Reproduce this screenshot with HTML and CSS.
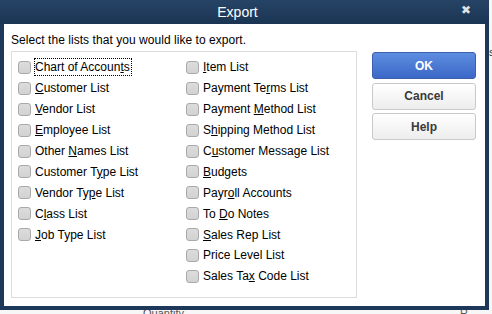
FILE: index.html
```html
<!DOCTYPE html>
<html>
<head>
<meta charset="utf-8">
<link rel="stylesheet" href="styles.css">
</head>
<body>
<div class="backdrop">
  <span class="frag frag-a">s</span>
  <span class="frag frag-b">Quantity</span>
  <span class="frag frag-c">R</span>
</div>
<div class="window">
  <div class="titlebar">
    <span class="title">Export</span>
    <span class="close">✖</span>
  </div>
  <div class="content">
    <div class="main">
      <div class="prompt">Select the lists that you would like to export.</div>
      <div class="listbox">
        <div class="col col1">
          <label class="item"><span class="cb"></span><span class="lbl focus">Chart of Accoun<u>t</u>s</span></label>
          <label class="item"><span class="cb"></span><span class="lbl"><u>C</u>ustomer List</span></label>
          <label class="item"><span class="cb"></span><span class="lbl"><u>V</u>endor List</span></label>
          <label class="item"><span class="cb"></span><span class="lbl"><u>E</u>mployee List</span></label>
          <label class="item"><span class="cb"></span><span class="lbl">Other <u>N</u>ames List</span></label>
          <label class="item"><span class="cb"></span><span class="lbl">Customer T<u>y</u>pe List</span></label>
          <label class="item"><span class="cb"></span><span class="lbl">Vendor Ty<u>p</u>e List</span></label>
          <label class="item"><span class="cb"></span><span class="lbl">C<u>l</u>ass List</span></label>
          <label class="item"><span class="cb"></span><span class="lbl"><u>J</u>ob Type List</span></label>
        </div>
        <div class="col col2">
          <label class="item"><span class="cb"></span><span class="lbl"><u>I</u>tem List</span></label>
          <label class="item"><span class="cb"></span><span class="lbl">Payment Te<u>r</u>ms List</span></label>
          <label class="item"><span class="cb"></span><span class="lbl">Payment <u>M</u>ethod List</span></label>
          <label class="item"><span class="cb"></span><span class="lbl">S<u>h</u>ipping Method List</span></label>
          <label class="item"><span class="cb"></span><span class="lbl">C<u>u</u>stomer Message List</span></label>
          <label class="item"><span class="cb"></span><span class="lbl"><u>B</u>udgets</span></label>
          <label class="item"><span class="cb"></span><span class="lbl">Payr<u>o</u>ll Accounts</span></label>
          <label class="item"><span class="cb"></span><span class="lbl">To <u>D</u>o Notes</span></label>
          <label class="item"><span class="cb"></span><span class="lbl"><u>S</u>ales Rep List</span></label>
          <label class="item"><span class="cb"></span><span class="lbl">Price Level List</span></label>
          <label class="item"><span class="cb"></span><span class="lbl">Sales Ta<u>x</u> Code List</span></label>
        </div>
      </div>
    </div>
    <div class="buttons">
      <button class="btn primary">OK</button>
      <button class="btn">Cancel</button>
      <button class="btn">Help</button>
    </div>
  </div>
</div>
</body>
</html>
```
FILE: styles.css
```css
html, body {
  margin: 0;
  padding: 0;
}
body {
  width: 492px;
  height: 314px;
  overflow: hidden;
  position: relative;
  background: #ffffff;
  font-family: "Liberation Sans", Arial, sans-serif;
}
.backdrop {
  position: absolute;
  inset: 0;
  background: #f7f7f7;
}
.frag {
  position: absolute;
  font-size: 11px;
  color: #333;
}
.frag-a { left: 489px; top: 46px; }
.frag-b { left: 143px; top: 307px; color: #555; }
.frag-c { left: 460px; top: 307px; color: #555; }

.window {
  position: relative;
  width: 489px;
  height: 310px;
  box-sizing: border-box;
  border: 4px solid #1d3859;
  border-top: 0;
  display: flex;
  flex-direction: column;
  background: #ffffff;
}
.titlebar {
  height: 24px;
  margin: 0 -4px;
  background: linear-gradient(#264466, #1b3453);
  display: flex;
  align-items: center;
  justify-content: center;
  position: relative;
  flex: none;
}
.title {
  color: #ffffff;
  font-size: 14px;
  margin-left: -14px;
}
.close {
  position: absolute;
  right: 18px;
  top: 3px;
  color: #dfe4ea;
  font-size: 12px;
  font-family: "DejaVu Sans", sans-serif;
  font-weight: bold;
}
.content {
  flex: 1;
  display: flex;
  padding: 0 0 0 7px;
}
.main {
  display: flex;
  flex-direction: column;
}
.prompt {
  font-size: 12px;
  color: #000;
  margin-top: 9px;
  line-height: 15px;
  letter-spacing: 0.05px;
}
.listbox {
  margin-top: 3px;
  width: 346px;
  height: 247px;
  box-sizing: border-box;
  border: 1px solid #dcdcdc;
  display: flex;
  padding: 5px 0 0 6px;
}
.col {
  display: flex;
  flex-direction: column;
}
.col1 { width: 168px; }
.item {
  display: flex;
  align-items: center;
  height: 20.9px;
  font-size: 12px;
  color: #000;
}
.cb {
  width: 11px;
  height: 11px;
  border: 1px solid #a9a9a9;
  border-radius: 3px;
  background: linear-gradient(#dcdcdc, #d2d2d2);
  flex: none;
  margin-right: 3px;
}
.lbl {
  padding: 1px 0;
  border: 1px dotted transparent;
}
.lbl.focus {
  border-color: #000;
  padding-right: 1px;
}
.buttons {
  display: flex;
  flex-direction: column;
  gap: 3.5px;
  margin-left: 15px;
  margin-top: 28px;
}
.btn {
  width: 104px;
  height: 27px;
  border: 1px solid #c9c9c9;
  border-radius: 3px;
  background: linear-gradient(#ffffff, #ededed);
  font-family: "Liberation Sans", Arial, sans-serif;
  font-weight: bold;
  font-size: 12px;
  color: #3a3a3a;
  padding: 0;
}
.btn.primary {
  border-color: #3c5fae;
  background: linear-gradient(#5d8ee0, #3c67c7);
  color: #ffffff;
}
```
